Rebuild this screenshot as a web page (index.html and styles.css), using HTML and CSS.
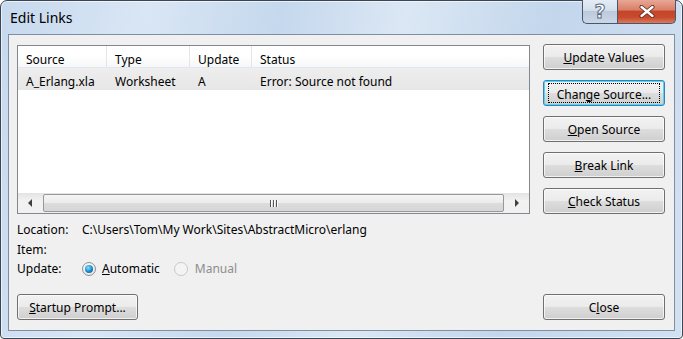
FILE: index.html
```html
<!DOCTYPE html>
<html>
<head>
<meta charset="utf-8">
<link rel="stylesheet" href="styles.css">
</head>
<body>
<div class="window">
  <div class="titlebar">
    <span class="title">Edit Links</span>
    <div class="caption">
      <div class="cap-btn help"><span>?</span></div>
      <div class="cap-btn close">
        <svg width="18" height="13" viewBox="0 0 18 13">
          <path d="M3.5 2 L14.5 11 M14.5 2 L3.5 11" stroke="#5a2417" stroke-width="4" stroke-linecap="round" fill="none"/>
          <path d="M3.5 2 L14.5 11 M14.5 2 L3.5 11" stroke="#ffffff" stroke-width="2.4" stroke-linecap="round" fill="none"/>
        </svg>
      </div>
    </div>
  </div>
  <div class="client">
    <div class="toprow">
      <div class="listview">
        <div class="lv-header">
          <div class="col c1">Source</div>
          <div class="col c2">Type</div>
          <div class="col c3">Update</div>
          <div class="col c4">Status</div>
        </div>
        <div class="lv-row">
          <div class="col c1">A_Erlang.xla</div>
          <div class="col c2">Worksheet</div>
          <div class="col c3">A</div>
          <div class="col c4">Error: Source not found</div>
        </div>
        <div class="lv-fill"></div>
        <div class="hscroll">
          <div class="arrow">
            <svg width="5" height="8" viewBox="0 0 5 8"><path d="M4 0 L0 4 L4 8 Z" fill="#404040"/></svg>
          </div>
          <div class="thumb"><span class="grip"><i></i><i></i><i></i></span></div>
          <div class="arrow">
            <svg width="5" height="8" viewBox="0 0 5 8"><path d="M1 0 L5 4 L1 8 Z" fill="#404040"/></svg>
          </div>
        </div>
      </div>
      <div class="sidebuttons">
        <div class="btn"><u>U</u>pdate Values</div>
        <div class="btn default"><span class="focus">Chan<u>g</u>e Source...</span></div>
        <div class="btn"><u>O</u>pen Source</div>
        <div class="btn"><u>B</u>reak Link</div>
        <div class="btn"><u>C</u>heck Status</div>
      </div>
    </div>
    <div class="info">
      <div class="inforow"><span class="lbl">Location:</span><span class="val">C:\Users\Tom\My Work\Sites\AbstractMicro\erlang</span></div>
      <div class="inforow"><span class="lbl">Item:</span><span class="val"></span></div>
      <div class="inforow upd"><span class="lbl">Update:</span>
        <span class="radio checked"><span class="dot"></span></span><span class="rtext"><u>A</u>utomatic</span>
        <span class="radio disabled"></span><span class="rtext dis">Manual</span>
      </div>
    </div>
    <div class="bottomrow">
      <div class="btn startup"><u>S</u>tartup Prompt...</div>
      <div class="btn closebtn">C<u>l</u>ose</div>
    </div>
  </div>
</div>
</body>
</html>
```

FILE: styles.css
```css
* { box-sizing: border-box; }
html, body { margin: 0; padding: 0; background: #ffffff; }
body { font-family: "Noto Sans", "Open Sans", sans-serif; font-size: 12px; color: #000; }

.window {
  width: 683px; height: 339px;
  border: 1px solid #3a4656;
  border-radius: 7px 7px 4px 4px;
  background: linear-gradient(100deg, #c7d9ee 0%, #d9e6f5 20%, #c5d8ed 38%, #dbe7f4 55%, #c3d6ec 75%, #d2e1f2 100%);
  display: flex; flex-direction: column;
  box-shadow: inset 0 0 0 1px rgba(255,255,255,0.6);
}

.titlebar { height: 33px; position: relative; flex: none; }
.title { position: absolute; left: 9px; top: 7px; font-size: 14px; color: #000; }
.caption { position: absolute; right: 6px; top: -1px; display: flex; }
.cap-btn { height: 24px; border: 1px solid #4b5666; border-top: none; display: flex; align-items: center; justify-content: center; }
.help {
  width: 35px; border-radius: 0 0 0 5px; border-right: none;
  background: linear-gradient(#e4ecf5 0%, #d3dfec 45%, #bccbdc 50%, #c9d7e6 100%);
}
.help span { font-size: 19px; color: #fff; font-family: "DejaVu Sans", sans-serif; font-weight: bold; -webkit-text-stroke: 1px #5d6b7c; line-height: 1; margin-top: 0; }
.close {
  width: 59px; border-radius: 0 0 5px 0;
  background: linear-gradient(#e9a796 0%, #d8806a 42%, #c5452a 50%, #c74a2c 75%, #dc7a5c 100%);
}

.client {
  flex: 1; margin: 0 7px 7px 7px;
  background: #f0f0f0;
  border: 1px solid #7f8fa3;
  padding: 9px 9px 10px 8px;
  display: flex; flex-direction: column;
}

.toprow { display: flex; gap: 13px; }
.listview {
  width: 513px; height: 169px; margin-top: 1px;
  border: 1px solid #828790; background: #fff;
  display: flex; flex-direction: column;
}
.lv-header {
  height: 22px; display: flex; flex: none;
  background: linear-gradient(#ffffff 0%, #ffffff 45%, #f6f7f8 100%);
  border-bottom: 1px solid #e3e6ea;
}
.lv-header .col { border-right: 1px solid #e5e5e5; padding-top: 6px; }
.col { padding-left: 8px; padding-top: 4px; display: flex; align-items: center; white-space: nowrap; }
.c1 { width: 89px; }
.c2 { width: 83px; }
.c3 { width: 62px; }
.c4 { flex: 1; border-right: none !important; }
.lv-row { height: 22px; display: flex; background: linear-gradient(#eeeeee, #e6e6e6); flex: none; }
.lv-fill { flex: 1; }
.hscroll {
  height: 20px; display: flex; flex: none;
  background: linear-gradient(#e3e3e3, #f2f2f2 40%, #f0f0f0);
}
.arrow { width: 25px; display: flex; align-items: center; justify-content: center; }
.thumb {
  flex: 1; margin: 1px 0;
  border: 1px solid #989898; border-radius: 2px;
  background: linear-gradient(#f5f5f5 0%, #ececec 48%, #dcdcdc 52%, #d6d6d6 100%);
  display: flex; align-items: center; justify-content: center;
}
.grip { display: flex; gap: 2px; }
.grip i { display: block; width: 1px; height: 7px; background: #555; box-shadow: 1px 0 0 #fff; }

.sidebuttons { display: flex; flex-direction: column; gap: 10px; width: 122px; }
.btn {
  height: 26px; width: 122px;
  border: 1px solid #707070; border-radius: 3px;
  background: linear-gradient(#f2f2f2 0%, #ebebeb 48%, #dddddd 52%, #cfcfcf 100%);
  box-shadow: inset 0 0 0 1px rgba(255,255,255,0.7);
  display: flex; align-items: center; justify-content: center;
  white-space: nowrap; padding-top: 1px;
}
.btn.default { border-color: #3c7fb1; box-shadow: inset 0 0 0 1px #48d8fb; padding-top: 0; }
.focus { outline: 1px dotted #000; padding: 2px 4px 0; margin: 0; width: 110px; height: 18px; display: flex; align-items: center; justify-content: center; }

.info { margin-top: 6px; }
.inforow { height: 19.5px; display: flex; align-items: center; }
.lbl { width: 65px; }
.radio {
  width: 14px; height: 14px; border-radius: 50%;
  border: 1px solid #8e8f8f;
  background: radial-gradient(circle at 40% 35%, #ffffff, #e0e0e0);
  display: flex; align-items: center; justify-content: center;
}
.radio.checked .dot {
  width: 8px; height: 8px; border-radius: 50%;
  background: radial-gradient(circle at 40% 35%, #8de0ff 0%, #1d90d3 50%, #0b3f79 100%);
}
.radio.disabled { border-color: #c9c9c9; background: #f4f4f4; margin-left: 14px; }
.rtext { margin-left: 6px; }
.rtext.dis { color: #8d8d8d; margin-left: 7px; }

.bottomrow { margin-top: auto; display: flex; justify-content: space-between; }
.startup { width: 121px; }
```
